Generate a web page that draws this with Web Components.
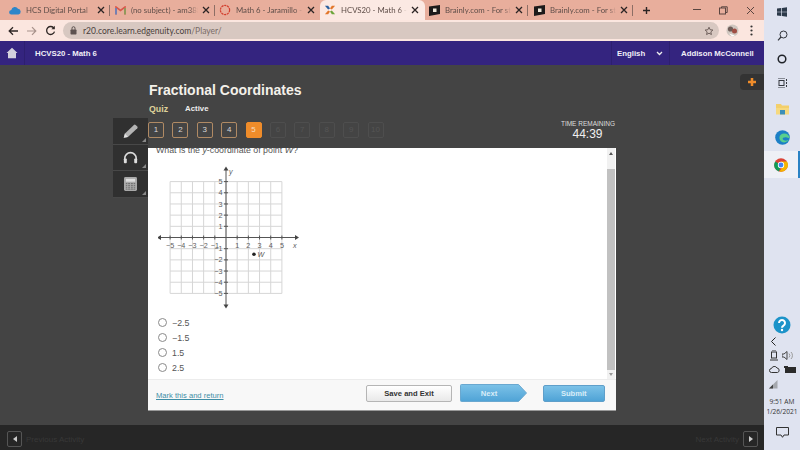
<!DOCTYPE html>
<html><head><meta charset="utf-8">
<style>
html,body{margin:0;padding:0;width:800px;height:450px;overflow:hidden;font-family:"Liberation Sans",Arial,sans-serif}
</style></head><body>
<app-shell>
  <browser-tabs></browser-tabs>
  <browser-bar></browser-bar>
  <course-header></course-header>
  <quiz-main></quiz-main>
  <page-footer></page-footer>
  <win-taskbar slot="side"></win-taskbar>
</app-shell>
<script>
function el(name, html){
  customElements.define(name, class extends HTMLElement{
    constructor(){super();this.attachShadow({mode:'open'}).innerHTML=html;}
  });
}
el('app-shell',`<style>:host{display:grid;grid-template-columns:764px 36px;width:800px;height:450px}
.l{display:flex;flex-direction:column;height:450px;min-width:0;overflow:hidden}</style>
<div class="l"><slot></slot></div><slot name="side"></slot>`);

const X=`<svg width="8" height="8" viewBox="0 0 8 8"><path d="M1 1l6 6M7 1l-6 6" stroke="#2b2424" stroke-width="1.3"/></svg>`;
el('browser-tab',`<style>:host{display:flex;align-items:center;height:20px;box-sizing:border-box;font:7.8px/20px Lato,"Open Sans",sans-serif;color:#5f4e49;position:relative;flex:none;width:var(--w,100px);padding-left:var(--p,12px)}
:host([active]){background:#fbe9e3;border-radius:6px 6px 0 0}
.i{flex:none;width:12px;height:12px;margin-right:5px;display:flex;align-items:center;justify-content:center}
.t{flex:1;overflow:hidden;white-space:nowrap;min-width:0;-webkit-mask-image:linear-gradient(90deg,#000 88%,transparent)}
.x{flex:none;margin:0 var(--m,5px) 0 4px;display:flex}
:host([sep])::after{content:"";position:absolute;right:0;top:5px;height:11px;width:1px;background:#8d6e65}
</style><span class="i"><slot name="icon"></slot></span><span class="t"><slot></slot></span><span class="x">${X}</span>`);

el('browser-tabs',`<style>:host{display:flex;height:20px;background:#e8ae9c;align-items:stretch;flex:none;position:relative}
.p{width:20px;margin-left:3px;display:flex;align-items:center;justify-content:center}
.win{margin-left:auto;display:flex;align-items:center}
.win span{width:27px;display:flex;justify-content:center;align-items:center}
svg{display:block}
</style>
<browser-tab sep style="--w:110px;--p:9px"><svg slot="icon" width="12" height="10" viewBox="0 0 12 10"><path d="M2.500 9.500a2.300 2.300 0 0 1-.2-4.600A3.600 3.600 0 0 1 9 3.800 2.900 2.900 0 0 1 9.500 9.500z" fill="#2d86c9"/></svg>HCS Digital Portal</browser-tab>
<browser-tab sep style="--w:105px;--p:4px"><svg slot="icon" width="11" height="9" viewBox="0 0 11 9"><path d="M1 8.500V1l4.500 3.500L10 1v7.500" fill="none" stroke="#d8594c" stroke-width="1.600"/><path d="M1 8.500V2" stroke="#5b86c8" stroke-width="1.600"/><path d="M10 8.500V2" stroke="#7fa55c" stroke-width="1.600"/></svg>(no subject) - am3887</browser-tab>
<browser-tab style="--w:105px;--p:4px"><svg slot="icon" width="12" height="12" viewBox="0 0 12 12"><circle cx="6" cy="6" r="4.600" fill="none" stroke="#d33d2c" stroke-width="1.200" stroke-dasharray="2.200 .7"/></svg>Math 6 - Jaramillo - G</browser-tab>
<browser-tab active style="--w:105px;--p:4px;--m:6px"><svg slot="icon" width="13" height="12" viewBox="0 0 13 12"><path d="M1 1.500l3.500 0 2 3-2 1z" fill="#2a5f9e"/><path d="M12 1.500l-3.500 0-2 3 2 1z" fill="#e2762a"/><path d="M1 10.500l3.500 0 2-3-2-1z" fill="#e2762a"/><path d="M12 10.500l-3.500 0-2-3 2-1z" fill="#6ca53a"/></svg>HCVS20 - Math 6 - Ed</browser-tab>
<browser-tab sep style="--w:103px;--p:3px;--m:5px"><svg slot="icon" width="11" height="11" viewBox="0 0 11 11"><path d="M0 1.500L11 0v9L0 11z" fill="#1d1a1a"/><rect x="4" y="3.500" width="3.500" height="3.500" fill="#efe7d9"/></svg>Brainly.com - For stud</browser-tab>
<browser-tab sep style="--w:105px;--p:5px;--m:5px"><svg slot="icon" width="11" height="11" viewBox="0 0 11 11"><path d="M0 1.500L11 0v9L0 11z" fill="#1d1a1a"/><rect x="4" y="3.500" width="3.500" height="3.500" fill="#efe7d9"/></svg>Brainly.com - For stud</browser-tab>
<span class="p"><svg width="9" height="9" viewBox="0 0 9 9"><path d="M4.500 1v7M1 4.500h7" stroke="#2b2424" stroke-width="1.400"/></svg></span>
<span class="win">
<span><svg width="8" height="2"><rect width="8" height="1" fill="#5a4540"/></svg></span>
<span><svg width="9" height="9" viewBox="0 0 9 9"><rect x=".5" y="2" width="6" height="6" fill="none" stroke="#5a4540"/><path d="M2.500 2V.8h5.700v5.700H6.700" fill="none" stroke="#5a4540"/></svg></span>
<span><svg width="9" height="9" viewBox="0 0 9 9"><path d="M1 1l7 7M8 1L1 8" stroke="#5a4540"/></svg></span>
</span>`);

el('browser-bar',`<style>:host{display:flex;align-items:center;height:21px;background:#fbe6df;flex:none}
.n{display:flex;align-items:center;padding-left:4px}
.n span{display:flex;width:18.500px;justify-content:center}
.u{margin-left:3.500px;flex:1;height:17px;border-radius:9px;background:#d8c8c1;display:flex;align-items:center;font:8.500px Lato,"Open Sans",sans-serif;color:#4a3f3c;padding-left:7px;box-sizing:border-box}
.lock{margin-right:6px}.u i{font-style:normal;color:#7a6c68}
.s{margin-left:auto;margin-right:5px;display:flex}
.r{display:flex;align-items:center;width:45px;padding-left:6.500px;box-sizing:border-box;gap:11px}
</style>
<span class="n">
<span><svg width="11" height="10" viewBox="0 0 11 10"><path d="M10 5H1.500M5 1.200L1.200 5 5 8.800" fill="none" stroke="#2e2624" stroke-width="1.300"/></svg></span>
<span><svg width="11" height="10" viewBox="0 0 11 10"><path d="M1 5h8.500M6 1.200L9.800 5 6 8.800" fill="none" stroke="#a8928b" stroke-width="1.200"/></svg></span>
<span><svg width="11" height="11" viewBox="0 0 11 11"><path d="M9 3.300A4 4 0 1 0 9.500 6.600" fill="none" stroke="#2e2624" stroke-width="1.300"/><path d="M9.800 .8v3.400H6.400z" fill="#2e2624"/></svg></span>
</span>
<div class="u"><svg class="lock" width="7" height="9" viewBox="0 0 7 9"><rect x=".5" y="3.500" width="6" height="5" rx=".7" fill="#5d5250"/><path d="M2 3.800V2.200a1.500 1.500 0 0 1 3 0v1.600" fill="none" stroke="#5d5250"/></svg>r20.core.learn.edgenuity.com<i>/Player/</i>
<span class="s"><svg width="10" height="10" viewBox="0 0 24 24"><path d="M12 3l2.800 6 6.500.7-4.900 4.400 1.400 6.400L12 17.200l-5.800 3.300 1.400-6.400L2.700 9.700 9.200 9z" fill="none" stroke="#5a4c48" stroke-width="2"/></svg></span></div>
<span class="r"><svg width="13" height="13" viewBox="0 0 13 13"><circle cx="6.500" cy="6.500" r="6" fill="#cfc6bf"/><circle cx="4.500" cy="5" r="2.600" fill="#6e5d58"/><circle cx="8.500" cy="7" r="2.500" fill="#a04e44"/><path d="M3 9.500l6 2-3 1z" fill="#fff"/></svg>
<svg width="3" height="11" viewBox="0 0 3 11"><circle cx="1.500" cy="1.500" r="1.100" fill="#333"/><circle cx="1.500" cy="5.500" r="1.100" fill="#333"/><circle cx="1.500" cy="9.500" r="1.100" fill="#333"/></svg></span>`);

el('course-header',`<style>:host{display:flex;align-items:center;height:24px;background:#34247f;flex:none;color:#f1eff8;font:bold 7.800px "Liberation Sans",sans-serif}
.h{width:25px;height:24px;display:flex;align-items:center;justify-content:center;border-right:1px solid #2d1f70;box-sizing:border-box}
.c{margin-left:10px}
.e{margin-left:auto;height:24px;display:flex;align-items:center;border-left:1px solid #2d1f70;padding-left:5px;width:58px;box-sizing:border-box;gap:11px}
.u{width:95px;box-sizing:border-box;border-left:1px solid #2d1f70;height:24px;display:flex;align-items:center;padding-left:11px;white-space:nowrap}
</style><span class="h"><svg width="12" height="12" viewBox="0 0 12 12"><path d="M6 .8L.5 6H2v5.200h8V6h1.500z" fill="#d4d1dd"/></svg></span>
<span class="c">HCVS20 - Math 6</span>
<span class="e">English<svg width="7" height="5" viewBox="0 0 7 5"><path d="M1 1l2.500 2.500L6 1" fill="none" stroke="#eee" stroke-width="1.300"/></svg></span>
<span class="u">Addison McConnell</span>`);

el('q-num',`<style>:host{display:flex;box-sizing:border-box;width:16px;height:16px;border:1px solid #b08a64;border-radius:2px;color:#d8d8d8;font:8px/14px "Liberation Sans";align-items:center;justify-content:center}
:host([on]){background:#ef8c2a;border-color:#ef8c2a;color:#f6dcc0}
:host([off]){border-color:#4e4e4e;color:#555}</style><slot></slot>`);

el('tool-btn',`<style>:host{display:flex;width:35px;height:26.500px;box-sizing:border-box;background:#303030;align-items:center;justify-content:center;position:relative;border-bottom:1px solid #484848}
:host::after{content:"";position:absolute;right:2px;bottom:2px;border:2px solid transparent;border-right-color:#888;border-bottom-color:#888}</style><slot></slot>`);

el('grid-plot',`<style>:host{display:block;width:160px;height:150px;margin-left:2px}svg{display:block}text{font:7.200px "Liberation Sans",sans-serif;fill:#5c5c5c}.v{font-style:italic}</style>
<svg id="s" width="160" height="150" viewBox="0 0 160 150"></svg>`);

el('radio-row',`<style>:host{display:flex;align-items:center;height:15px;font:8.800px "Liberation Sans",sans-serif;color:#555}
i{width:7px;height:7px;border:1px solid #8a8a8a;border-radius:50%;margin-right:5px;background:#fff;flex:none}</style><i></i><slot></slot>`);

el('action-btn',`<style>:host{display:flex;align-items:center;justify-content:center;box-sizing:border-box;height:17px;border-radius:2px;font:bold 7.600px "Liberation Sans",sans-serif;width:var(--w);}
:host([kind=plain]){background:linear-gradient(#fff,#e9e9e9);border:1px solid #b5b5b5;color:#333}
:host([kind=blue]){background:linear-gradient(#7cc2e8,#4fa3d6);border:1px solid #5f9fca;color:#d8edf8}
</style><slot></slot>`);
el('next-btn',`<style>:host{display:block;width:67px;height:18px;position:relative}
span{display:flex;align-items:center;justify-content:center;height:18px;width:58px;font:bold 7.600px "Liberation Sans";color:#d8edf8;position:relative}
svg{position:absolute;left:0;top:0}</style>
<svg width="67" height="18"><defs><linearGradient id="g" x2="0" y2="1"><stop offset="0" stop-color="#7cc2e8"/><stop offset="1" stop-color="#4fa3d6"/></linearGradient></defs><path d="M1.500.5H58.500L66.500 9 58.500 17.500H1.500a1 1 0 0 1-1-1V1.500a1 1 0 0 1 1-1z" fill="url(#g)" stroke="#6aa8d0"/></svg><span><slot></slot></span>`);

el('quiz-card',`<style>:host{display:flex;flex-direction:column;width:468px;height:263px;background:#fff;flex:none;border-bottom:1px solid #999;box-sizing:border-box}
.b{flex:1;display:flex;min-height:0}
.c{flex:1;overflow:hidden;padding-left:8px;min-width:0}
.q{font:8.800px "Liberation Sans",sans-serif;color:#555;margin-top:-4px;height:15px;line-height:12px;white-space:nowrap}
.o{margin-top:6px;margin-left:2px}
.sb{width:8px;background:#f1f1f1;display:flex;flex-direction:column;align-items:center;margin-right:1px}
.th{width:8px;height:201px;background:#c1c1c1;flex:none}
.up,.dn{width:0;height:0;border:2.500px solid transparent;flex:none}
.up{border-bottom:3px solid #555;margin-top:2px;margin-bottom:13.500px}
.dn{border-top:3px solid #999;margin-top:auto;margin-bottom:1px}
.f{height:31px;background:#f8f8f8;border-top:1px solid #ececec;box-sizing:border-box;display:flex;align-items:center;padding:0 11px 4px 8px;flex:none}
a{font:7.600px "Liberation Sans",sans-serif;color:#3f8ea6;text-decoration:underline;margin-top:5px}
.g{margin-left:auto;display:flex;align-items:center;gap:8px}
</style>
<div class="b"><div class="c"><div class="q">What is the <em>y</em>-coordinate of point <em>W</em>?</div>
<grid-plot></grid-plot>
<div class="o"><radio-row>−2.5</radio-row><radio-row>−1.5</radio-row><radio-row>1.5</radio-row><radio-row>2.5</radio-row></div></div>
<div class="sb"><i class="up"></i><i class="th"></i><i class="dn"></i></div></div>
<div class="f"><a>Mark this and return</a><span class="g"><action-btn kind="plain" style="--w:86px">Save and Exit</action-btn><next-btn>Next</next-btn><action-btn kind="blue" style="--w:62.500px;margin-left:7.500px">Submit</action-btn></span></div>`);

el('quiz-main',`<style>:host{display:block;flex:1;background:#444;position:relative;color:#fff;min-height:0}
.w{display:grid;grid-template-columns:113px 35px 468px;grid-template-rows:auto auto;padding-top:15px}
.hd{grid-column:3;grid-row:1;padding-left:1px}
h1{margin:0;font:bold 14px/20px "Liberation Sans",sans-serif;color:#f4f1ea}
.st{display:flex;align-items:center;height:15px;margin-top:1px;font:bold 7.800px "Liberation Sans",sans-serif;color:#eee}
.st b{font-size:8.800px;color:#ded29a;margin-right:17px}
.tools{grid-column:2;grid-row:2;margin-top:2px;display:flex;flex-direction:column}
.mid{grid-column:3;grid-row:2;display:flex;flex-direction:column}
.nums{display:flex;gap:8.400px;height:32px;padding-top:6px;box-sizing:border-box}
.t{position:absolute;left:546px;top:55px;width:84px;text-align:center;font:6.500px "Liberation Sans",sans-serif;color:#ddd;line-height:8px}
.t b{display:block;font:12px/13px "Liberation Sans";color:#f0f0f0;margin-left:-1px}
.plus{position:absolute;right:0;top:9px;width:24px;height:16px;background:#333;border-radius:4px 0 0 4px;display:flex;align-items:center;justify-content:center}
</style>
<div class="w"><div class="hd"><h1>Fractional Coordinates</h1><div class="st"><b>Quiz</b>Active</div></div>
<div class="tools">
<tool-btn><svg width="17" height="16" viewBox="0 0 20 18"><path d="M2 17l1.500-5L14 1.800a1.500 1.500 0 0 1 2 0l2 2a1.500 1.500 0 0 1 0 2L7 16z" fill="#b4b4b4"/><path d="M2 17l1.500-5 3.500 4z" fill="#e2e2e2"/></svg></tool-btn>
<tool-btn><svg width="15" height="13" viewBox="0 0 17 14"><path d="M2 10V8a6.500 6.500 0 0 1 13 0v2" fill="none" stroke="#dcdcdc" stroke-width="1.800"/><rect x="1" y="8" width="3.300" height="5.500" rx="1" fill="#dcdcdc"/><rect x="12.700" y="8" width="3.300" height="5.500" rx="1" fill="#dcdcdc"/></svg></tool-btn>
<tool-btn><svg width="13" height="14" viewBox="0 0 14 15"><rect width="14" height="15" rx="1.500" fill="#a9a9a9"/><rect x="2" y="2" width="10" height="3" fill="#ddd"/><path d="M2 7h10M2 9h10M2 11h10M2 13h10" stroke="#6c6c6c" stroke-width="1"/><path d="M4 6.500v7M7 6.500v7M10 6.500v7" stroke="#a9a9a9"/></svg></tool-btn>
</div>
<div class="mid"><div class="nums"><q-num>1</q-num><q-num>2</q-num><q-num>3</q-num><q-num>4</q-num><q-num on>5</q-num><q-num off>6</q-num><q-num off>7</q-num><q-num off>8</q-num><q-num off>9</q-num><q-num off>10</q-num></div>
<quiz-card></quiz-card></div></div>
<div class="t">TIME REMAINING<b>44:39</b></div>
<div class="plus"><svg width="10" height="10" viewBox="0 0 10 10"><path d="M5 1v8M1 5h8" stroke="#ef8c2a" stroke-width="2.500"/></svg></div>`);

el('page-footer',`<style>:host{display:flex;align-items:center;height:25px;background:#262626;flex:none;font:8px "Liberation Sans",sans-serif;color:#383838;justify-content:space-between;padding:3px 6px 0 7px;box-sizing:border-box}
.a{width:15px;height:16px;border:1px solid #555;border-radius:2px;box-sizing:border-box;display:flex;align-items:center;justify-content:center}
span{display:flex;align-items:center;gap:4px}</style>
<span><i class="a"><svg width="4" height="6"><path d="M4 0v6L0 3z" fill="#ccc"/></svg></i>Previous Activity</span>
<span>Next Activity<i class="a"><svg width="4" height="6"><path d="M0 0v6l4-3z" fill="#ccc"/></svg></i></span>`);

el('win-taskbar',`<style>:host{display:flex;flex-direction:column;align-items:center;width:36px;height:450px;background:#dfe3f0;box-sizing:border-box}
.i{width:36px;display:flex;align-items:center;justify-content:center;flex:none}
.act{background:#eef0f6;border-right:2px solid #2a82c4;box-sizing:border-box}
.sp{flex:1}
.time{font:6.600px/10px "Open Sans",sans-serif;color:#333;text-align:center;white-space:nowrap;margin-top:6px;margin-bottom:4px}
.tr{display:flex;gap:4px;height:14px;align-items:center;justify-content:center;flex:none}
</style>
<div class="i" style="height:24px"><svg width="10" height="10" viewBox="0 0 10 10"><path d="M0 1.500L4.300 1v3.700H0zM5 .9L10 .2v4.500H5zM0 5.300h4.300V9L0 8.500zM5 5.300h5v4.500L5 9.100z" fill="#2c3a4a"/></svg></div>
<div class="i" style="height:23px"><svg width="11" height="11" viewBox="0 0 11 11"><circle cx="6.500" cy="4.500" r="3.500" fill="none" stroke="#33363d"/><path d="M4 7L1 10.300" stroke="#33363d" stroke-width="1.200"/></svg></div>
<div class="i" style="height:24px"><svg width="10" height="10"><circle cx="5" cy="5" r="3.800" fill="none" stroke="#1f2228" stroke-width="1.500"/></svg></div>
<div class="i" style="height:23px"><svg width="11" height="10" viewBox="0 0 11 10"><rect x="2" y="2.500" width="5" height="5" fill="none" stroke="#33363d"/><path d="M1 0h7M1 10h7M9.500 1v2M9.500 4v2M9.500 7v2" stroke="#33363d"/></svg></div>
<div class="i" style="height:30px"><svg width="13" height="12" viewBox="0 0 13 12"><path d="M0 1h5l1 1.500h7V11H0z" fill="#f3cf6b"/><rect x="0" y="5" width="13" height="6.500" fill="#f6d97f"/><rect x="4" y="7" width="5" height="4.500" fill="#3d8fb8"/></svg></div>
<div class="i" style="height:27px"><svg width="15" height="15" viewBox="0 0 15 15"><circle cx="7.500" cy="7.500" r="7.300" fill="#1c7fc6"/><path d="M14.800 8.300c-.5-3-3-5-6-4.800C5 3.800 3.600 7 5 10c1 2.300 4 3 6 2 1-.5 2-1 3-2.500-1.500 1.500-5 1.500-6 0C7 8 9 7.300 11 7.300z" fill="#58cf8e"/></svg></div>
<div class="i act" style="height:27px"><svg width="14" height="14" viewBox="0 0 14 14"><circle cx="7" cy="7" r="6.800" fill="#db4437"/><path d="M7 7L1.200 3.500A6.800 6.800 0 0 0 5 13.500z" fill="#0f9d58"/><path d="M7 3.500h6a6.800 6.800 0 0 1-7.500 10L8.500 9z" fill="#f4b400"/><circle cx="7" cy="7" r="3.200" fill="#fff"/><circle cx="7" cy="7" r="2.400" fill="#4285f4"/></svg></div>
<div class="sp"></div>
<div class="i" style="height:18px"><svg width="18" height="18" viewBox="0 0 18 18"><circle cx="9" cy="9" r="8.500" fill="#1c93c9"/><path d="M6 7a3 3 0 1 1 4.500 2.600C9.500 10.200 9 10.600 9 11.800" fill="none" stroke="#fff" stroke-width="2"/><circle cx="9" cy="14" r="1.200" fill="#fff"/></svg></div>
<div class="tr" style="justify-content:flex-start;width:36px;padding-left:7px;box-sizing:border-box"><svg width="5" height="9" viewBox="0 0 5 9"><path d="M4.500 .5l-4 4 4 4" fill="none" stroke="#222"/></svg></div>
<div class="tr"><svg width="8" height="11" viewBox="0 0 8 11"><rect x="1.500" y="2" width="5" height="6" fill="none" stroke="#333"/><path d="M2 0h4M0 10h8" stroke="#333"/></svg><svg width="13" height="9" viewBox="0 0 13 9"><path d="M0 3h2l3-2.500v8L2 6H0z" fill="none" stroke="#444"/><path d="M7 2.500a3 3 0 0 1 0 4M9 1a5 5 0 0 1 0 7" fill="none" stroke="#999"/></svg></div>
<div class="tr"><svg width="11" height="7" viewBox="0 0 11 7"><path d="M2.500 6.500a2 2 0 0 1 0-4 3 3 0 0 1 5.500-.5 2.300 2.300 0 0 1 .5 4.500z" fill="none" stroke="#333"/></svg><svg width="12" height="7" viewBox="0 0 12 7"><rect x="1" y="1" width="11" height="6" fill="#2b2b2b"/><rect width="4" height="2" fill="#2b2b2b"/></svg></div>
<div class="tr" style="justify-content:flex-start;width:36px;padding-left:4px;box-sizing:border-box;margin-top:1px"><svg width="11" height="10" viewBox="0 0 11 10"><path d="M1 9.500L9.500 1v8.500z" fill="#a5a8ae"/><path d="M1 9.500L5 5.500v4z" fill="#444"/></svg></div>
<div class="time">9:51 AM<br>1/26/2021</div>
<div class="i" style="height:22px;margin-bottom:7px"><svg width="13" height="11" viewBox="0 0 13 11"><path d="M.5.500h12v7.500H8L6.500 10.300 5 8H.5z" fill="none" stroke="#333"/></svg></div>`);

(function(){
  const card=document.querySelector('quiz-main').shadowRoot.querySelector('quiz-card').shadowRoot.querySelector('grid-plot');
  const s=card.shadowRoot.getElementById('s');
  const ox=68,oy=78.5,u=11.18; let h='';
  for(let i=-5;i<=5;i++){
    h+=`<path d="M${ox+i*u} ${oy-5*u}V${oy+5*u}M${ox-5*u} ${oy+i*u}H${ox+5*u}" stroke="#d6d6d6" stroke-width="1" fill="none"/>`;
  }
  h+=`<path d="M${ox} ${oy-69}V${oy+69}M${ox-67} ${oy}H${ox+71}" stroke="#555" stroke-width="1"/>`;
  h+=`<path d="M${ox-2.5} ${oy-67}L${ox} ${oy-71}L${ox+2.5} ${oy-67}zM${ox-2.5} ${oy+67}L${ox} ${oy+71}L${ox+2.5} ${oy+67}zM${ox-65} ${oy-2.5}L${ox-69} ${oy}L${ox-65} ${oy+2.5}zM${ox+69} ${oy-2.5}L${ox+73} ${oy}L${ox+69} ${oy+2.5}z" fill="#444"/>`;
  for(let i=-5;i<=5;i++){ if(!i)continue;
    h+=`<path d="M${ox+i*u} ${oy-2}v4M${ox-2} ${oy-i*u}h4" stroke="#555"/>`;
    const m=i<0?'−'+(-i):i;
    h+=`<text x="${ox+i*u}" y="${oy+10.5}" text-anchor="middle">${m}</text>`;
    h+=`<text x="${ox-3.5}" y="${oy-i*u+2.6}" text-anchor="end">${m}</text>`;
  }
  h+=`<text class="v" x="${ox+3}" y="${oy-63.5}">y</text><text class="v" x="${ox+67}" y="${oy+10.5}">x</text>`;
  h+=`<circle cx="${ox+2.5*u}" cy="${oy+1.5*u}" r="1.800" fill="#222"/><text class="v" x="${ox+2.5*u+3.5}" y="${oy+1.5*u+2.6}">W</text>`;
  s.innerHTML=h;
})();
</script>
</body></html>
